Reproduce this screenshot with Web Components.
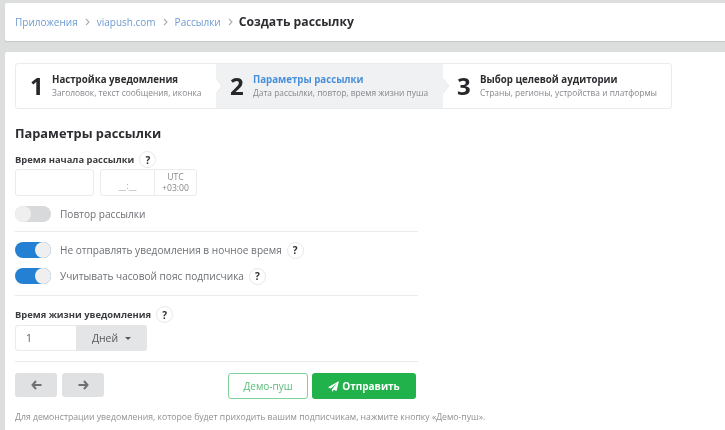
<!DOCTYPE html>
<html lang="ru">
<head>
<meta charset="utf-8">
<title>Создать рассылку</title>
<style>
    html, body { margin: 0; height: 100%; overflow: hidden; }
    body {
        background: #dcdddd;
        font-family: "Open Sans", "Noto Sans", sans-serif;
        color: #2b2d30;
    }
</style>
</head>
<body>
<app-page>
    <bread-crumbs title-text="Создать рассылку" items="Приложения|viapush.com|Рассылки"></bread-crumbs>
    <main-panel>
        <step-wizard></step-wizard>
        <send-form></send-form>
    </main-panel>
</app-page>

<script>
class AppPage extends HTMLElement {
    constructor() {
        super();
        this.attachShadow({ mode: 'open' });
        this.shadowRoot.innerHTML = `
        <style>
            :host { display: flex; flex-direction: column; gap: 11px; height: 430px; padding: 3px 0 0 5px; box-sizing: border-box; filter: blur(0.35px); }
        </style>
        <slot></slot>`;
    }
}

class BreadCrumbs extends HTMLElement {
    constructor() {
        super();
        this.attachShadow({ mode: 'open' });
    }

    connectedCallback() {
        const items = this.getAttribute('items').split('|');
        const links = items.map(i => `<a>${i}</a><svg width="5" height="8" viewBox="0 0 5 8"><path d="M1 1l3 3-3 3" fill="none" stroke="#a9adb0" stroke-width="1.1"/></svg>`).join('');
        this.shadowRoot.innerHTML = `
        <style>
            :host { display: flex; align-items: center; gap: 7px; height: 38px; padding-left: 10px; padding-bottom: 1px; box-sizing: border-box; background: #fff; border-radius: 2px 0 0 2px; box-shadow: 0 1px 1px #c4c5c5; font-size: 10px; }
            a { color: #6f9bd1; }
            b { font-size: 12.2px; font-weight: 700; color: #2b2d30; margin-left: -1px; }
        </style>
        ${links}<b>${this.getAttribute('title-text')}</b>`;
    }
}

class MainPanel extends HTMLElement {
    constructor() {
        super();
        this.attachShadow({ mode: 'open' });
        this.shadowRoot.innerHTML = `
        <style>
            :host { display: block; flex: 1; background: #fff; border-radius: 2px 0 0 0; padding: 11px 10px 0; box-sizing: border-box; }
        </style>
        <slot></slot>`;
    }
}

class WizardStep extends HTMLElement {
    constructor() {
        super();
        this.attachShadow({ mode: 'open' });
        this.shadowRoot.innerHTML = `
        <style>
            :host { display: flex; align-items: center; gap: 8px; box-sizing: border-box; height: 100%; padding-left: 14px; position: relative; }
            :host([active]) { background: #eff1f3; }
            .num { font-size: 24px; font-weight: 700; line-height: 1; color: #25272a; width: 14px; }
            :host([active]) .num, :host([last]) .num { width: 15px; }
            .title { font-size: 9.7px; font-weight: 700; line-height: 14px; white-space: nowrap; }
            :host([active]) .title { color: #4a90d9; }
            .sub { font-size: 8.4px; line-height: 12px; color: #85888c; white-space: nowrap; }
            .tip { position: absolute; left: 100%; top: 50%; margin-top: -8px; z-index: 1; display: block; }
            :host(:not([tip])) .tip { display: none; }
        </style>
        <span class="num"><slot name="num"></slot></span>
        <div><div class="title"><slot name="title"></slot></div><div class="sub"><slot name="sub"></slot></div></div>
        <svg class="tip" width="7" height="16" viewBox="0 0 7 16"><path d="M0 .5L6 8 0 15.500" fill="${this.getAttribute('tip') === 'grey' ? '#eff1f3' : '#fff'}" stroke="#e9ebec"/></svg>`;
    }
}

class StepWizard extends HTMLElement {
    constructor() {
        super();
        this.attachShadow({ mode: 'open' });
        this.shadowRoot.innerHTML = `
        <style>
            :host { display: grid; grid-template-columns: 200px 227px 228px; width: 657px; height: 46px; box-sizing: border-box; border: 1px solid #e9ebec; border-radius: 3px; }
        </style>
        <wizard-step tip="white">
            <span slot="num">1</span><span slot="title">Настройка уведомления</span><span slot="sub">Заголовок, текст сообщения, иконка</span>
        </wizard-step>
        <wizard-step active tip="grey">
            <span slot="num">2</span><span slot="title">Параметры рассылки</span><span slot="sub">Дата рассылки, повтор, время жизни пуша</span>
        </wizard-step>
        <wizard-step last>
            <span slot="num">3</span><span slot="title">Выбор целевой аудитории</span><span slot="sub">Страны, регионы, устройства и платформы</span>
        </wizard-step>`;
    }
}

class HelpMark extends HTMLElement {
    constructor() {
        super();
        this.attachShadow({ mode: 'open' });
        this.shadowRoot.innerHTML = `
        <style>
            :host { display: inline-flex; align-items: center; justify-content: center; width: 15px; height: 15px; border: 1px solid #e7e8e9; border-radius: 50%; font-size: 10px; font-weight: 700; color: #2b2d30; background: #fff; flex: none; }
        </style>
        ?`;
    }
}

class ToggleRow extends HTMLElement {
    constructor() {
        super();
        this.attachShadow({ mode: 'open' });
        this.shadowRoot.innerHTML = `
        <style>
            :host { display: flex; align-items: center; font-size: 10.1px; color: #6d7074; height: 16px; }
            .track { width: 36px; height: 16px; border-radius: 8px; background: #d8d9da; position: relative; margin-right: 9px; flex: none; }
            :host([on]) .track { background: #2480d2; }
            .knob { position: absolute; left: 0; top: 0; width: 16px; height: 16px; border-radius: 50%; background: #efefef; }
            :host([on]) .knob { left: 20px; }
            ::slotted(help-mark) { margin-left: 5px; }
        </style>
        <span class="track"><i class="knob"></i></span><slot></slot>`;
    }
}

class SendForm extends HTMLElement {
    constructor() {
        super();
        this.attachShadow({ mode: 'open' });
        this.shadowRoot.innerHTML = `
        <style>
            :host { display: block; width: 403px; }
            h2 { font-size: 12.8px; font-weight: 700; line-height: 18px; margin: 15px 0 9px; color: #2b2d30; }
            .label { display: flex; align-items: center; gap: 5px; font-size: 9.4px; font-weight: 700; line-height: 16px; color: #3a3c40; }
            .dates { display: flex; gap: 6px; margin-top: 1px; }
            .box { box-sizing: border-box; height: 27px; border: 1px solid #e9ebec; border-radius: 3px; }
            .date { width: 79px; }
            .time { width: 97px; display: flex; }
            .time span { width: 53px; font-size: 9px; color: #a5a8ab; text-align: center; line-height: 32px; }
            .utc { flex: 1; border-left: 1px solid #e9ebec; font-size: 8.6px; line-height: 11px; color: #85888c; text-align: center; padding-top: 2px; }
            hr { border: 0; border-top: 1px solid #e9ebec; margin: 0; }
            .rep { margin: 10px 0 9px; }
            .tg { display: flex; flex-direction: column; gap: 10px; margin: 10px 0 11px; }
            .ttl { margin: 10px 0 2px; }
            .count { display: flex; width: 132px; height: 26px; }
            .count .v { flex: 1; border: 1px solid #e9ebec; border-right: 0; border-radius: 3px 0 0 3px; font-size: 10.4px; color: #55585c; line-height: 24px; padding-left: 10px; }
            .count .u { width: 71px; flex: none; background: #e4e5e7; border-radius: 0 3px 3px 0; font-size: 10.4px; color: #55585c; display: flex; align-items: center; justify-content: center; gap: 7px; box-sizing: border-box; }
            .caret { border: 3px solid transparent; border-top-color: #55585c; border-bottom: 0; }
            .acts { display: flex; align-items: flex-start; margin: 11px 2px 0 0; height: 26px; }
            .nav { width: 42px; height: 24px; border-radius: 3px; background: #e0e1e3; display: flex; align-items: center; justify-content: center; margin-right: 5px; }
            .demo { margin-left: auto; width: 80px; height: 26px; box-sizing: border-box; border: 1px solid #7ed39a; border-radius: 3px; color: #57bd78; font-size: 10px; display: flex; align-items: center; justify-content: center; margin-right: 4px; }
            .go { width: 104px; height: 26px; background: #21b24b; border-radius: 3px; color: #fff; font-size: 10px; font-weight: 700; display: flex; align-items: center; justify-content: center; gap: 3px; }
            .note { font-size: 8.66px; color: #8e9194; margin-top: 12px; white-space: nowrap; line-height: 13px; }
        </style>
        <h2>Параметры рассылки</h2>
        <div class="label">Время начала рассылки <help-mark></help-mark></div>
        <div class="dates">
            <div class="box date"></div>
            <div class="box time"><span>__:__</span><div class="utc">UTC<br>+03:00</div></div>
        </div>
        <toggle-row class="rep" style="display:flex">Повтор рассылки</toggle-row>
        <hr>
        <div class="tg">
            <toggle-row on>Не отправлять уведомления в ночное время <help-mark></help-mark></toggle-row>
            <toggle-row on>Учитывать часовой пояс подписчика <help-mark></help-mark></toggle-row>
        </div>
        <hr>
        <div class="label ttl">Время жизни уведомления <help-mark></help-mark></div>
        <div class="count"><div class="v">1</div><div class="u">Дней <i class="caret"></i></div></div>
        <hr style="margin-top:10px">
        <div class="acts">
            <div class="nav"><svg width="11" height="10" viewBox="0 0 11 10"><path d="M5 1L1.500 5 5 9M2 5h8.500" fill="none" stroke="#6d7074" stroke-width="2"/></svg></div>
            <div class="nav"><svg width="11" height="10" viewBox="0 0 11 10"><path d="M6 1l3.500 4L6 9M9 5H.5" fill="none" stroke="#6d7074" stroke-width="2"/></svg></div>
            <div class="demo">Демо-пуш</div>
            <div class="go"><svg width="11" height="11" viewBox="0 0 11 11"><path d="M11 0L0 6.300l2.800 1.100L9 2.300 4 8.200V11l1.800-2.200 2.700 1.100z" fill="#fff"/></svg> Отправить</div>
        </div>
        <div class="note">Для демонстрации уведомления, которое будет приходить вашим подписчикам, нажмите кнопку «Демо-пуш».</div>`;
    }
}

customElements.define('app-page', AppPage);
customElements.define('bread-crumbs', BreadCrumbs);
customElements.define('main-panel', MainPanel);
customElements.define('wizard-step', WizardStep);
customElements.define('step-wizard', StepWizard);
customElements.define('help-mark', HelpMark);
customElements.define('toggle-row', ToggleRow);
customElements.define('send-form', SendForm);
</script>
</body>
</html>
